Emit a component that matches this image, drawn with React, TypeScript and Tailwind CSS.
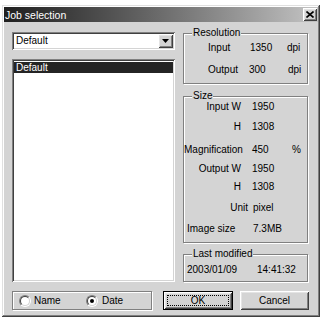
import React from "react";

const raised =
  "shadow-[inset_1px_1px_0_#ffffff,inset_-1px_-1px_0_#404040,inset_2px_2px_0_#e4e4e4,inset_-2px_-2px_0_#808080]";
const sunken =
  "shadow-[inset_1px_1px_0_#808080,inset_-1px_-1px_0_#ffffff,inset_2px_2px_0_#404040,inset_-2px_-2px_0_#d4d4d4]";
const etched =
  "border border-[#808080] shadow-[inset_1px_1px_0_#ffffff,1px_1px_0_#ffffff]";

function Group({
  label,
  className,
  children,
}: {
  label?: string;
  className: string;
  children?: React.ReactNode;
}) {
  return (
    <div className={`relative ${etched} ${className}`}>
      {label && (
        <span className="absolute -top-[7px] left-[8px] px-[1px] bg-[#d4d4d4] leading-[12px] whitespace-nowrap">
          {label}
        </span>
      )}
      {children}
    </div>
  );
}

function Radio({ checked }: { checked?: boolean }) {
  return (
    <span className="w-[12px] h-[12px] rounded-full border border-t-[#808080] border-l-[#808080] border-r-white border-b-white flex shrink-0">
      <span className="flex-1 rounded-full border border-t-[#404040] border-l-[#404040] border-r-[#d4d4d4] border-b-[#d4d4d4] bg-white flex items-center justify-center">
        {checked && <span className="w-[4px] h-[4px] rounded-full bg-black" />}
      </span>
    </span>
  );
}

function SizeRow({
  label,
  value,
  mt,
  extra,
}: {
  label: string;
  value: string;
  mt: string;
  extra?: string;
}) {
  return (
    <div className={`flex h-[12px] leading-[12px] whitespace-nowrap ${mt}`}>
      <span className="w-[57px] text-right">{label}</span>
      <span className="ml-[11px] w-[40px]">{value}</span>
      {extra && <span>{extra}</span>}
    </div>
  );
}

export default function App() {
  return (
    <div className="w-[320px] h-[320px] overflow-hidden bg-white pt-[5px] pl-[2px] font-['Liberation_Sans',Arial,sans-serif] text-[10px] text-black">
      <div
        className={`w-[318px] h-[312px] bg-[#d4d4d4] p-[2px] flex flex-col shadow-[inset_-1px_-1px_0_#404040,inset_1px_1px_0_#e0e0e0,inset_-2px_-2px_0_#808080,inset_2px_2px_0_#ffffff]`}
      >
        {/* Title bar */}
        <div className="h-[15px] flex items-center justify-between bg-gradient-to-r from-[#202020] to-[#c4c4c4] pl-[1px] pr-[1px]">
          <span className="text-white text-[10.5px] leading-[12px]">Job selection</span>
          <span
            className={`w-[14px] h-[13px] bg-[#d4d4d4] flex items-center justify-center ${raised}`}
          >
            <svg width="8" height="7" viewBox="0 0 8 7">
              <path
                d="M0.5 0.5 L7.5 6.5 M7.5 0.5 L0.5 6.5"
                stroke="#000"
                strokeWidth="1.6"
                fill="none"
              />
            </svg>
          </span>
        </div>

        {/* Content */}
        <div className="flex flex-col pl-[8px] pt-[10px]">
          <div className="flex h-[250px]">
            {/* Left column */}
            <div className="w-[163px] flex flex-col">
              <div className={`h-[18px] bg-white p-[2px] flex ${sunken}`}>
                <span className="flex-1 pl-[2px] leading-[14px]">Default</span>
                <span
                  className={`w-[15px] h-[14px] bg-[#d4d4d4] flex items-center justify-center ${raised}`}
                >
                  <svg width="7" height="4" viewBox="0 0 7 4">
                    <polygon points="0,0 7,0 3.5,4" fill="#000" />
                  </svg>
                </span>
              </div>
              <div className={`mt-[9px] flex-1 bg-white p-[2px] ${sunken}`}>
                <div className="mt-[1px] h-[11px] bg-[#242424] text-white pl-[2px] leading-[11px]">
                  Default
                </div>
              </div>
            </div>

            {/* Right column */}
            <div className="ml-[8px] w-[125px] flex flex-col">
              <Group label="Resolution" className="mt-[1px] h-[51px]">
                <div className="pl-[24px] pt-[8px]">
                  <div className="flex h-[12px] leading-[12px]">
                    <span className="w-[42px]">Input</span>
                    <span className="w-[37px]">1350</span>
                    <span>dpi</span>
                  </div>
                  <div className="flex h-[12px] leading-[12px] mt-[10px]">
                    <span className="w-[41px]">Output</span>
                    <span className="w-[39px]">300</span>
                    <span>dpi</span>
                  </div>
                </div>
              </Group>

              <Group label="Size" className="mt-[12px] h-[147px]">
                <SizeRow label="Input W" value="1950" mt="mt-[4px]" />
                <SizeRow label="H" value="1308" mt="mt-[8px]" />
                <SizeRow label="Magnification" value="450" mt="mt-[11px]" extra="%" />
                <SizeRow label="Output W" value="1950" mt="mt-[7px]" />
                <SizeRow label="H" value="1308" mt="mt-[6px]" />
                <div className="flex h-[12px] leading-[12px] mt-[9px]">
                  <span className="w-[64px] text-right">Unit</span>
                  <span className="ml-[5px]">pixel</span>
                </div>
                <div className="flex h-[12px] leading-[12px] mt-[9px] pl-[3px]">
                  <span className="w-[66px]">Image size</span>
                  <span>7.3MB</span>
                </div>
              </Group>

              <Group label="Last modified" className="mt-[11px] h-[28px]">
                <div className="flex h-[12px] leading-[12px] mt-[9px] pl-[3px]">
                  <span className="w-[70px]">2003/01/09</span>
                  <span>14:41:32</span>
                </div>
              </Group>
            </div>
          </div>

          {/* Bottom row */}
          <div className="mt-[9px] h-[19px] flex">
            <Group className="w-[140px] h-[19px] flex items-center pl-[6px]">
              <div className="w-[67px] flex items-center gap-[3px]">
                <Radio />
                <span className="leading-[12px]">Name</span>
              </div>
              <div className="flex items-center gap-[4px]">
                <Radio checked />
                <span className="leading-[12px]">Date</span>
              </div>
            </Group>
            <div
              className={`ml-[11px] w-[70px] h-[19px] border border-black bg-[#d4d4d4] p-[3px] flex ${raised}`}
            >
              <div className="flex-1 border border-dotted border-black flex items-center justify-center leading-[10px]">
                OK
              </div>
            </div>
            <div
              className={`ml-[7px] w-[69px] h-[19px] bg-[#d4d4d4] flex items-center justify-center leading-[12px] ${raised}`}
            >
              Cancel
            </div>
          </div>
        </div>
      </div>
    </div>
  );
}
